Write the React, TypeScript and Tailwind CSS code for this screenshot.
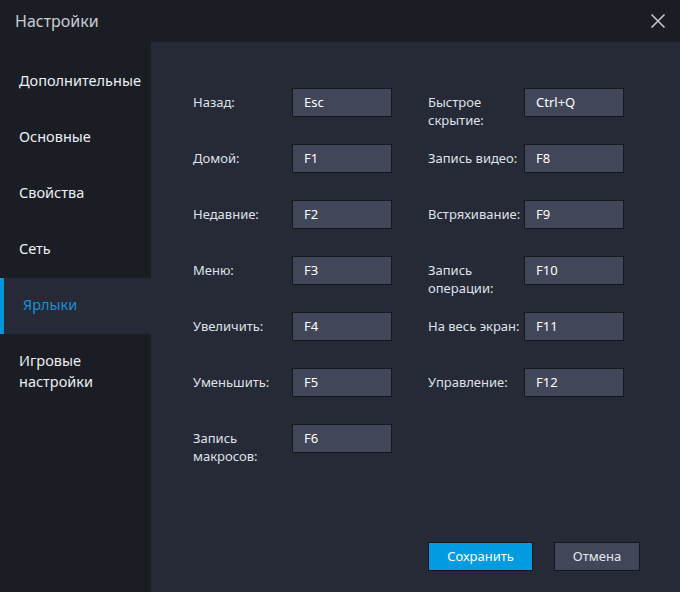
import React from "react";

const leftKeys = [
  { label: "Назад:", value: "Esc" },
  { label: "Домой:", value: "F1" },
  { label: "Недавние:", value: "F2" },
  { label: "Меню:", value: "F3" },
  { label: "Увеличить:", value: "F4" },
  { label: "Уменьшить:", value: "F5" },
  { label: "Запись макросов:", value: "F6" },
];

const rightKeys = [
  { label: "Быстрое скрытие:", value: "Ctrl+Q" },
  { label: "Запись видео:", value: "F8" },
  { label: "Встряхивание:", value: "F9" },
  { label: "Запись операции:", value: "F10" },
  { label: "На весь экран:", value: "F11" },
  { label: "Управление:", value: "F12" },
];

const menu = ["Дополнительные", "Основные", "Свойства", "Сеть", "Ярлыки", "Игровые настройки"];

function KeyRow({ label, value, labelWidth }: { label: string; value: string; labelWidth: string }) {
  return (
    <div className="flex h-[56px] items-start">
      <div className={`${labelWidth} pt-[5px] text-[13px] leading-[18px] text-[#dfe2ea]`}>{label}</div>
      <div className="flex h-[29px] w-[100px] items-center border border-[#16181e] bg-[#424659] px-[11px] text-[13px] text-white">
        {value}
      </div>
    </div>
  );
}

export default function App() {
  const active = "Ярлыки";

  return (
    <div
      className="flex h-[592px] w-[680px] flex-col bg-[#1b1d25]"
      style={{ fontFamily: '"Noto Sans", "Open Sans", sans-serif' }}
    >
      {/* title bar */}
      <div className="flex h-[42px] shrink-0 items-center justify-between pl-[15px] pr-[14px]">
        <span className="text-[16px] text-[#c9ccd4]">Настройки</span>
        <svg width="16" height="16" viewBox="0 0 16 16" className="text-[#c4c6cc]">
          <path d="M1.5 1.5 L14.5 14.5 M14.5 1.5 L1.5 14.5" stroke="currentColor" strokeWidth="1.6" />
        </svg>
      </div>

      <div className="flex flex-1">
        {/* sidebar */}
        <div className="w-[151px] shrink-0 pt-[12px]">
          {menu.map((item) => (
            <div
              key={item}
              className={`h-[56px] pl-[19px] pr-2 pt-[16px] text-[14.5px] leading-[21px] ${
                item === active
                  ? "border-l-[4px] border-[#0096dc] bg-[#262936] pl-[15px] text-[#1a90d2]"
                  : "text-[#eceef3]"
              }`}
            >
              {item === "Игровые настройки" ? (
                <span>
                  Игровые
                  <br />
                  настройки
                </span>
              ) : (
                item
              )}
            </div>
          ))}
        </div>

        {/* content */}
        <div className="relative flex-1 bg-[#262936] pl-[42px] pt-[46px]">
          <div className="flex gap-[36px]">
            <div className="flex flex-col">
              {leftKeys.map((k) => (
                <KeyRow key={k.label} {...k} labelWidth="w-[99px]" />
              ))}
            </div>
            <div className="flex flex-col">
              {rightKeys.map((k) => (
                <KeyRow key={k.label} {...k} labelWidth="w-[96px]" />
              ))}
            </div>
          </div>

          <div className="absolute bottom-[21px] right-[40px] flex gap-[21px]">
            <button className="h-[29px] w-[105px] border border-[#14161c] bg-[#009be1] text-[13px] text-white">
              Сохранить
            </button>
            <button className="h-[29px] w-[86px] border border-[#14161c] bg-[#424659] text-[13px] text-[#e4e6ec]">
              Отмена
            </button>
          </div>
        </div>
      </div>
    </div>
  );
}
